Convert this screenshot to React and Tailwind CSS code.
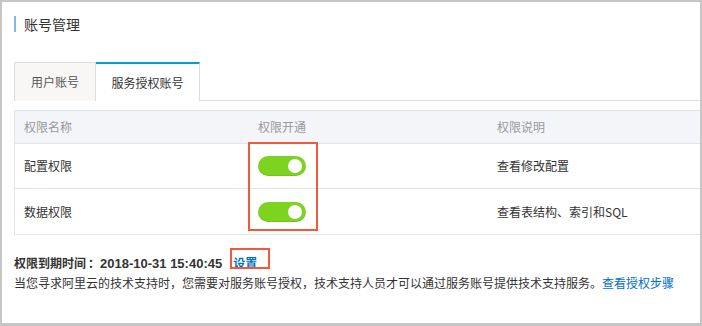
import React from "react";

const font = { fontFamily: '"Noto Sans CJK SC", "Liberation Sans", sans-serif' };

function Switch() {
  return (
    <div className="relative w-[48px] h-[20px] rounded-full bg-[#7ed321] shadow-[inset_0_-1px_0_rgba(0,0,0,0.08)]">
      <div className="absolute right-[4px] top-[3px] w-[14px] h-[14px] rounded-full bg-white" />
    </div>
  );
}

export default function App() {
  const rows = [
    { name: "配置权限", desc: "查看修改配置" },
    { name: "数据权限", desc: "查看表结构、索引和SQL" },
  ];
  return (
    <div
      className="relative w-[702px] h-[326px] bg-white border-t-2 border-l-2 border-r-2 border-b-[3px] border-[#c6c6c6] overflow-hidden text-[#333]"
      style={font}
    >
      <div className="pl-[12px] pt-[14px]">
        <div className="flex items-center h-[16px]">
          <div className="w-[2px] h-[16px] bg-[#88b7e0]" />
          <div className="ml-[8px] text-[14px] leading-[16px] text-[#333]">账号管理</div>
        </div>

        <div className="mt-[30px] flex h-[39px] border-b border-[#dddddd]">
          <div className="w-[82px] h-[39px] flex items-center justify-center text-[12px] text-[#555] bg-[#f8f7f6] border-t border-l border-r border-[#dddddd]">
            用户账号
          </div>
          <div className="w-[104px] h-[39px] flex items-center justify-center text-[12px] text-[#333] bg-white border-t-2 border-[#00a2ca] border-r border-r-[#dddddd] -mb-px">
            服务授权账号
          </div>
        </div>

        <div className="mt-[9px] border-t border-l border-b border-[#e2e4e8]">
          <div className="flex h-[33px] items-center bg-[#f4f5f9] text-[12px] text-[#999] border-b border-[#e2e4e8]">
            <div className="w-[233px] pl-[9px]">权限名称</div>
            <div className="w-[239px] pl-[10px]">权限开通</div>
            <div className="pl-[10px]">权限说明</div>
          </div>
          {rows.map((r, i) => (
            <div
              key={r.name}
              className={
                "flex h-[45px] items-center text-[12px] text-[#333]" +
                (i === 0 ? " border-b border-[#e2e4e8]" : "")
              }
            >
              <div className="w-[233px] pl-[9px]">{r.name}</div>
              <div className="w-[239px] pl-[10px]">
                <Switch />
              </div>
              <div className="pl-[10px]">{r.desc}</div>
            </div>
          ))}
        </div>

        <div className="mt-[18px] text-[12px] leading-[19px]">
          <div className="flex items-baseline font-bold text-[#333] whitespace-nowrap">
            <span>权限到期时间</span>
            <span className="ml-[2px]">：</span>
            <span
              className="text-[13px]"
              style={{ fontFamily: '"Liberation Sans", "Noto Sans CJK SC", sans-serif' }}
            >
              2018-10-31 15:40:45
            </span>
            <span className="ml-[11px] text-[#0070cc]">设置</span>
          </div>
          <div className="text-[#333] whitespace-nowrap">
            当您寻求阿里云的技术支持时，您需要对服务账号授权，技术支持人员才可以通过服务账号提供技术支持服务。
            <span className="text-[#0070cc]">查看授权步骤</span>
          </div>
        </div>
      </div>

      <div className="absolute left-[246px] top-[140px] w-[70px] h-[89px] border-2 border-[#f05a3a]" />
      <div className="absolute left-[228px] top-[246px] w-[40px] h-[21px] border-2 border-[#f05a3a]" />
    </div>
  );
}
